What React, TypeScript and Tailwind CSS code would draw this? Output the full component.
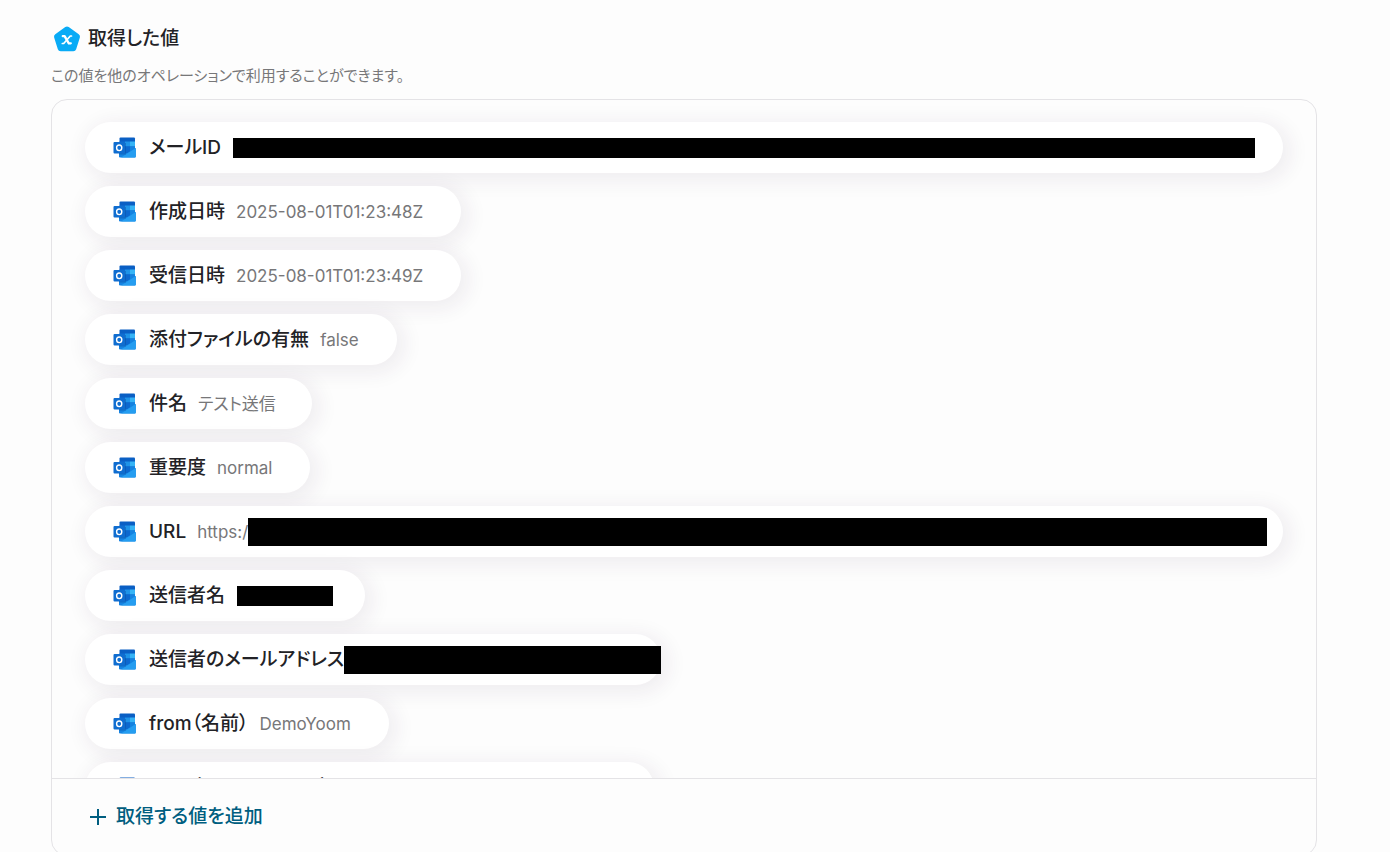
import clsx from "clsx";

interface OutputValue {
  label: string;
  value?: string;
  redaction?: string;
  className: string;
}

const values: OutputValue[] = [
  { label: "メールID", redaction: "ml-3 h-5 flex-1", className: "w-full pr-7" },
  { label: "作成日時", value: "2025-08-01T01:23:48Z", className: "pr-[38px]" },
  { label: "受信日時", value: "2025-08-01T01:23:49Z", className: "pr-[38px]" },
  { label: "添付ファイルの有無", value: "false", className: "pr-[38px]" },
  { label: "件名", value: "テスト送信", className: "pr-9" },
  { label: "重要度", value: "normal", className: "pr-[38px]" },
  {
    label: "URL",
    value: "https:/",
    redaction: "h-7 flex-1",
    className: "w-full pr-4",
  },
  { label: "送信者名", redaction: "ml-3 h-5 w-24", className: "pr-8" },
  {
    label: "送信者のメールアドレス",
    redaction: "h-7 w-[317px]",
    className: "pr-0",
  },
  { label: "from（名前）", value: "DemoYoom", className: "pr-[38px]" },
  {
    label: "from（メールアドレス）",
    redaction: "ml-3 h-4 w-72",
    className: "pr-6",
  },
];

function VariableIcon() {
  return (
    <svg viewBox="0 0 28 28" className="ml-0.5 size-7 shrink-0" aria-hidden="true">
      <path
        d="M14 4.500 24 11.600 20.300 23.300H7.700L4 11.600Z"
        fill="#09abf6"
        stroke="#09abf6"
        strokeWidth="6"
        strokeLinejoin="round"
      />
      <path
        d="M9.800 11.200H11.600L15.800 18.300H17.800"
        fill="none"
        stroke="#fff"
        strokeWidth="2.300"
        strokeLinecap="round"
        strokeLinejoin="round"
      />
      <path
        d="M18.500 11H17.300L10.700 18.500H9.300"
        fill="none"
        stroke="#fff"
        strokeWidth="1.700"
        strokeLinecap="round"
        strokeLinejoin="round"
      />
    </svg>
  );
}

function OutlookIcon() {
  return (
    <svg viewBox="0 0 24 22" className="h-[22px] w-6 shrink-0" aria-hidden="true">
      <path d="M6.500 1.500a1 1 0 0 1 1-1H21a1 1 0 0 1 1 1V20H6.500Z" fill="#0a5fc4" />
      <path d="M6.500 4.500h5.500v5H6.500Z" fill="#0f6fd6" />
      <path d="M12 4.500h5v5h-5Z" fill="#1f93e8" />
      <path d="M17 4.500h5v5h-5Z" fill="#36b4f6" />
      <path d="M12 9.500h5v6h-5Z" fill="#0c68cf" />
      <path d="M17 9.500h5v5h-5Z" fill="#1482e0" />
      <path d="M6 14 14 16 22.800 11v8.500a1 1 0 0 1-1 1H7a1 1 0 0 1-1-1Z" fill="#1583e2" />
      <path d="M22.800 11v8.500a1 1 0 0 1-1 1H8Z" fill="#259df0" />
      <path d="M6 6h7v11.500H6Z" fill="#0a4a98" opacity=".4" />
      <rect x="0.500" y="5" width="11.500" height="11.500" rx="1" fill="#0f6dd0" />
      <ellipse cx="6.200" cy="10.800" rx="2.600" ry="2.800" fill="none" stroke="#fff" strokeWidth="1.400" />
    </svg>
  );
}

function ValuePill({ label, value, redaction, className }: OutputValue) {
  return (
    <li
      className={clsx(
        "flex h-[51px] max-w-full items-center rounded-full bg-white pl-7 shadow-[4px_4px_20px_4px_rgba(60,30,75,0.07)]",
        className,
      )}
    >
      <OutlookIcon />
      <span className="ml-3 whitespace-nowrap text-[19px] leading-7 font-medium text-[#222226]">
        {label}
      </span>
      {value && (
        <span className="ml-[11px] whitespace-nowrap text-[17px] leading-7 text-[#777779]">
          {value}
        </span>
      )}
      {redaction && <span className={clsx("bg-black", redaction)} />}
    </li>
  );
}

export default function App() {
  return (
    <main className="h-screen overflow-hidden bg-[#fdfdfd] pt-[25px] pr-[73px] pl-[51px] font-['Inter','Noto_Sans_CJK_JP',sans-serif] [font-feature-settings:'palt']">
      <header>
        <div className="flex items-center gap-[7px]">
          <VariableIcon />
          <h1 className="text-[19px] leading-7 font-medium text-[#222226]">取得した値</h1>
        </div>
        <p className="mt-[11px] text-[15px] leading-6 text-[#777779]">
          この値を他のオペレーションで利用することができます。
        </p>
      </header>

      <section className="mt-[11px] overflow-hidden rounded-2xl border border-[#e4e3e6]">
        <ul className="flex max-h-[678px] flex-col items-start gap-[13px] overflow-y-auto px-[33px] py-[22px] [scrollbar-width:none] *:shrink-0">
          {values.map((item) => (
            <ValuePill key={item.label} {...item} />
          ))}
        </ul>
        <div className="border-t border-[#e4e3e6] px-9 py-6">
          <button
            type="button"
            className="flex items-center gap-2 text-[19px] leading-7 font-medium text-[#005e80]"
          >
            <svg viewBox="0 0 20 20" className="size-5" aria-hidden="true">
              <path d="M10 2v16M2 10h16" stroke="currentColor" strokeWidth="2" fill="none" />
            </svg>
            取得する値を追加
          </button>
        </div>
      </section>
    </main>
  );
}
